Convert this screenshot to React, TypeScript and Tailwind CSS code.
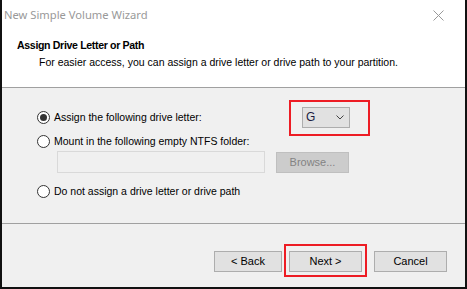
import React from "react";

function Radio({ checked }: { checked?: boolean }) {
  return (
    <span className="flex h-[13px] w-[13px] shrink-0 items-center justify-center rounded-full border border-[#333333] bg-white">
      {checked && <span className="h-[7px] w-[7px] rounded-full bg-[#333333]" />}
    </span>
  );
}

function Button({ label, disabled, className = "" }: { label: string; disabled?: boolean; className?: string }) {
  return (
    <div
      className={
        "flex h-[21px] items-center justify-center border text-[11px] " +
        (disabled ? "border-[#bfbfbf] bg-[#cccccc] text-[#838383] " : "border-[#adadad] bg-[#e1e1e1] text-black ") +
        className
      }
    >
      {label}
    </div>
  );
}

export default function App() {
  return (
    <div
      className="flex h-[289px] w-[467px] flex-col border-x-2 border-b-2 border-[#111111] bg-[#f0f0f0] text-black"
      style={{ fontFamily: '"Liberation Sans", Arial, sans-serif' }}
    >
      <div className="bg-white">
        <div className="flex h-[30px] items-center justify-between pl-[2px] pr-[21px]">
          <span className="text-[11.2px] text-[#999999]" style={{ fontFamily: '"Noto Sans", sans-serif' }}>
            New Simple Volume Wizard
          </span>
          <svg width="11" height="11" viewBox="0 0 11 11" aria-hidden="true">
            <path d="M0.5 0.5 L10.5 10.5 M10.5 0.5 L0.5 10.5" stroke="#999999" strokeWidth="1" fill="none" />
          </svg>
        </div>
        <div className="h-[58px] border-b border-[#a0a0a0] pl-[15px] pt-[9px] text-[10.5px] leading-[13px]">
          <div className="text-[10.6px] font-bold tracking-[-0.35px]">Assign Drive Letter or Path</div>
          <div className="mt-[4px] pl-[22px]">For easier access, you can assign a drive letter or drive path to your partition.</div>
        </div>
      </div>

      <div className="h-[136px] border-b border-[#a0a0a0] pl-[35px] pt-[19px] text-[10.5px] leading-[13px]">
        <div className="flex h-[21px] items-center">
          <div className="flex w-[265px] items-center gap-[4px]">
            <Radio checked />
            <span>Assign the following drive letter:</span>
          </div>
          <div className="relative flex h-[21px] w-[48px] items-center justify-between border border-[#adadad] bg-[#e1e1e1] pl-[3px] pr-[5px]">
            <span className="text-[12px] text-[#1a1a40]">G</span>
            <svg width="8" height="5" viewBox="0 0 8 5" aria-hidden="true">
              <path d="M0.5 0.5 L4 4 L7.5 0.5" stroke="#444444" strokeWidth="1" fill="none" />
            </svg>
            <div className="absolute left-[-14px] top-[-8px] h-[36px] w-[81px] border-2 border-[#ed1c24]" />
          </div>
        </div>
        <div className="mt-[5px] flex h-[16px] items-center gap-[4px]">
          <Radio />
          <span>Mount in the following empty NTFS folder:</span>
        </div>
        <div className="ml-[20px] mt-[2px] flex h-[22px] items-center gap-[11px]">
          <div className="h-[22px] w-[208px] border border-[#d9d9d9] bg-[#f0f0f0]" />
          <Button label="Browse..." disabled className="w-[73px]" />
        </div>
        <div className="mt-[10px] flex h-[16px] items-center gap-[4px]">
          <Radio />
          <span>Do not assign a drive letter or drive path</span>
        </div>
      </div>

      <div className="flex flex-1 items-start pl-[212px] pt-[27px]">
        <Button label="< Back" className="w-[68px]" />
        <div className="relative ml-[7px]">
          <Button label="Next >" className="w-[73px]" />
          <div className="absolute left-[-5px] top-[-7px] h-[33px] w-[83px] border-2 border-[#ed1c24]" />
        </div>
        <Button label="Cancel" className="ml-[12px] w-[73px]" />
      </div>
    </div>
  );
}
